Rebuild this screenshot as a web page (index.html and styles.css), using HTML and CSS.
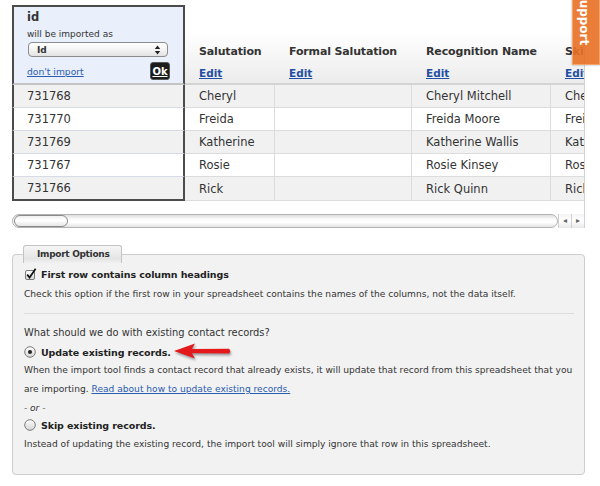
FILE: index.html
```html
<!DOCTYPE html>
<html lang="en">
<head>
<meta charset="utf-8">
<title>Import</title>
<link rel="stylesheet" href="styles.css">
</head>
<body>
<div class="support">Support</div>

<div class="grid-wrap">
  <div class="grid-view">
    <table class="grid">
      <thead>
        <tr>
          <th class="sel">
            <div class="field-name">id</div>
            <div class="imported">will be imported as</div>
            <div class="select"><span>Id</span><svg class="updown" width="7" height="10" viewBox="0 0 7 10"><path d="M3.5 0.5 L6.2 4 H0.8Z M3.5 9.5 L6.2 6 H0.8Z" fill="#222"/></svg></div>
            <div class="sel-actions"><a class="dont" href="#">don't import</a><span class="ok">Ok</span></div>
          </th>
          <th class="c2"><div class="col-name">Salutation</div><a class="edit" href="#">Edit</a></th>
          <th class="c3"><div class="col-name">Formal Salutation</div><a class="edit" href="#">Edit</a></th>
          <th class="c4"><div class="col-name">Recognition Name</div><a class="edit" href="#">Edit</a></th>
          <th class="c5"><div class="col-name">Ski Name</div><a class="edit" href="#">Edit</a></th>
        </tr>
      </thead>
      <tbody>
        <tr><td class="sel">731768</td><td>Cheryl</td><td></td><td>Cheryl Mitchell</td><td>Cheryl Mitchell</td></tr>
        <tr><td class="sel">731770</td><td>Freida</td><td></td><td>Freida Moore</td><td>Freida Moore</td></tr>
        <tr><td class="sel">731769</td><td>Katherine</td><td></td><td>Katherine Wallis</td><td>Katherine Wallis</td></tr>
        <tr><td class="sel">731767</td><td>Rosie</td><td></td><td>Rosie Kinsey</td><td>Rosie Kinsey</td></tr>
        <tr class="last"><td class="sel">731766</td><td>Rick</td><td></td><td>Rick Quinn</td><td>Rick Quinn</td></tr>
      </tbody>
    </table>
  </div>
  <div class="hscroll">
    <div class="track"><div class="thumb"></div></div>
    <div class="arrows"><span class="arr">&#9666;</span><span class="arr">&#9656;</span></div>
  </div>
</div>

<fieldset class="options">
  <legend>Import Options</legend>
  <label class="opt opt-check">
    <svg class="cb" width="12" height="12" viewBox="0 0 12 12">
      <defs><linearGradient id="g1" x1="0" y1="0" x2="0" y2="1"><stop offset="0" stop-color="#fff"/><stop offset="1" stop-color="#d8d8d8"/></linearGradient></defs>
      <rect x="0.5" y="2.5" width="9" height="9" rx="1.5" fill="url(#g1)" stroke="#7a7a7a"/>
      <path d="M2.2 6.6 L4.6 9.6 L10.6 0.8" fill="none" stroke="#111" stroke-width="1.7"/>
    </svg>
    <span>First row contains column headings</span>
  </label>
  <p class="desc">Check this option if the first row in your spreadsheet contains the names of the columns, not the data itself.</p>
  <div class="divider"></div>
  <p class="question">What should we do with existing contact records?</p>
  <label class="opt opt-radio">
    <svg class="rb" width="12" height="12" viewBox="0 0 12 12">
      <defs><linearGradient id="g2" x1="0" y1="0" x2="0" y2="1"><stop offset="0" stop-color="#fff"/><stop offset="1" stop-color="#d4d4d4"/></linearGradient></defs>
      <circle cx="6" cy="6" r="5.3" fill="url(#g2)" stroke="#7d7d7d"/>
      <circle cx="6" cy="6" r="2" fill="#222"/>
    </svg>
    <span>Update existing records.</span>
    <svg class="arrow" width="60" height="20" viewBox="0 0 60 20">
      <path d="M1 9 L22 1.5 L19 7 L56 6.8 Q58.5 9.3 56 11.6 L19 11.2 L22 16.5 Z" fill="#e3191c"/>
    </svg>
  </label>
  <p class="desc">When the import tool finds a contact record that already exists, it will update that record from this spreadsheet that you<br>are importing. <a href="#">Read about how to update existing records.</a></p>
  <p class="or">- or -</p>
  <label class="opt opt-radio">
    <svg class="rb" width="12" height="12" viewBox="0 0 12 12">
      <circle cx="6" cy="6" r="5.3" fill="url(#g2)" stroke="#7d7d7d"/>
    </svg>
    <span>Skip existing records.</span>
  </label>
  <p class="desc desc-last">Instead of updating the existing record, the import tool will simply ignore that row in this spreadsheet.</p>
</fieldset>
</body>
</html>
```

FILE: styles.css
```css
html, body {
  margin: 0;
  background: #fff;
}
body {
  padding: 0 15px 0 12px;
  font-family: "DejaVu Sans", "Liberation Sans", sans-serif;
  color: #333;
  position: relative;
  overflow: hidden;
  height: 486px;
  box-sizing: border-box;
}

/* support tab */
.support {
  position: absolute;
  top: -22px;
  right: 0;
  box-sizing: border-box;
  width: 28px;
  padding: 12px 4px 19px 0;
  background: rgba(232, 112, 36, 0.9);
  border: 1px solid #f3a56c;
  box-shadow: 0 0 2px rgba(0,0,0,0.35);
  color: #fff;
  font-weight: bold;
  font-size: 12px;
  line-height: 22px;
  writing-mode: vertical-rl;
  z-index: 5;
}

/* grid */
.grid-wrap {
  padding-top: 5px;
  border-right: 1px solid #d2d2d2;
}
.grid-view {
  overflow: hidden;
}
.grid {
  table-layout: fixed;
  width: 679px;
  border-collapse: separate;
  border-spacing: 0;
}
.grid th {
  box-sizing: border-box;
  padding: 0 14px 3px;
  vertical-align: bottom;
  text-align: left;
  white-space: nowrap;
  overflow: hidden;
  border-bottom: 2px solid #d3d3d3;
  background: linear-gradient(#fff 35%, #ececec);
}
.grid th.sel {
  width: 173px;
  padding: 2px 13px 3px 13px;
  border: 2px solid #4b4b4b;
  border-bottom: 2px solid #c4c4c4;
  background: #e9effb;
}
.grid th.c2 { width: 90px; }
.grid th.c3 { width: 137px; }
.grid th.c4 { width: 139px; }
.grid th.c5 { width: 140px; }

.col-name {
  font-size: 11px;
  font-weight: bold;
  letter-spacing: -0.15px;
  line-height: 14px;
  margin-bottom: 7px;
}
.edit {
  display: block;
  font-size: 10.5px;
  font-weight: bold;
  line-height: 14px;
  color: #1f4fa3;
  text-decoration: underline;
}

.field-name {
  font-size: 11.5px;
  font-weight: bold;
  line-height: 16px;
}
.imported {
  font-size: 9px;
  font-weight: normal;
  line-height: 12px;
  margin-top: 3px;
}
.select {
  display: flex;
  align-items: center;
  justify-content: space-between;
  box-sizing: border-box;
  width: 140px;
  height: 15px;
  margin: 2px 0 0 1px;
  padding: 0 6px 0 8px;
  border: 1px solid #8c8c8c;
  border-radius: 4px;
  background: linear-gradient(#ffffff, #f4f4f4 50%, #e2e2e2);
  font-size: 9px;
  font-weight: bold;
}
.updown { display: block; }
.sel-actions {
  display: flex;
  align-items: center;
  justify-content: space-between;
  height: 18px;
  margin-top: 5px;
}
.dont {
  font-size: 9.2px;
  font-weight: normal;
  color: #2a5cb0;
  text-decoration: underline;
}
.ok {
  display: flex;
  align-items: center;
  justify-content: center;
  width: 20px;
  height: 18px;
  box-sizing: border-box;
  border-radius: 3px;
  background: #1c1c1c;
  border: 1px solid #555;
  color: #fff;
  font-size: 10px;
  font-weight: bold;
  text-decoration: underline;
}

.grid td {
  box-sizing: border-box;
  height: 23px;
  padding: 0 14px;
  font-size: 11.5px;
  line-height: 22px;
  white-space: nowrap;
  overflow: hidden;
  border-bottom: 1px solid #dcdcdc;
  border-right: 1px solid #dcdcdc;
}
.grid tbody tr:nth-child(odd) td { background: #f1f1f1; }
.grid tbody tr:nth-child(even) td { background: #fff; }
.grid tbody td.sel {
  padding-left: 13px;
  border-left: 2px solid #4b4b4b;
  border-right: 2px solid #4b4b4b;
  border-bottom-color: #d6dbe6;
  background: #e9effb;
}
.grid tbody tr.last td.sel {
  border-bottom: 2px solid #4b4b4b;
}

/* scrollbar */
.hscroll {
  display: flex;
  height: 14px;
  margin-top: 13px;
}
.track {
  flex: 1;
  display: flex;
  align-items: center;
  box-sizing: border-box;
  border: 1px solid #b3b3b3;
  border-radius: 7px;
  background: linear-gradient(#dedede, #fbfbfb 35%, #fff 60%, #e4e4e4);
}
.thumb {
  box-sizing: border-box;
  width: 54px;
  height: 12px;
  margin-left: 1px;
  border: 1px solid #8a8a8a;
  border-radius: 6px;
  background: linear-gradient(#f0f0f0, #fff 45%, #e6e6e6);
}
.arrows {
  display: flex;
}
.arr {
  width: 12px;
  text-align: center;
  font-size: 8px;
  line-height: 14px;
  color: #666;
  border-left: 1px solid #d0d0d0;
  background: linear-gradient(#f4f4f4, #fff 50%, #e8e8e8);
}

/* options */
.options {
  margin: 17px 0 0;
  padding: 0 10px 20px 11px;
  border: 1px solid #cdcdcd;
  border-radius: 4px;
  background: #f2f2f2;
  min-width: 0;
}
.options legend {
  margin-left: -1px;
  padding: 0 12px 0 13px;
  height: 18px;
  box-sizing: border-box;
  line-height: 17px;
  border: 1px solid #c4c4c4;
  border-bottom: none;
  border-radius: 3px 3px 0 0;
  background: linear-gradient(#f6f6f6, #e4e4e4 75%, #f0f0f0);
  font-size: 9px;
  font-weight: bold;
  letter-spacing: -0.3px;
  color: #333;
}
.opt {
  display: flex;
  align-items: center;
  font-size: 9.5px;
  font-weight: bold;
  letter-spacing: -0.1px;
  color: #222;
}
.opt-check {
  height: 22px;
  padding-left: 1px;
}
.opt-check .cb { margin-right: 4px; }
.opt-radio {
  height: 18px;
}
.opt-radio .rb { margin-right: 5px; }
.arrow {
  margin-left: 2px;
  filter: drop-shadow(1px 2px 1px rgba(0,0,0,0.35));
}
.desc {
  margin: 0;
  font-size: 9.1px;
  line-height: 19px;
  color: #333;
}
.desc-last {
  margin-top: 1px;
}
.desc a {
  color: #2a5cb0;
  text-decoration: underline;
}
.divider {
  margin-top: 9px;
  border-top: 1px solid #dcdcdc;
}
.question {
  margin: 9px 0 0;
  font-size: 9.9px;
  line-height: 20px;
}
.or {
  margin: 1px 0 0;
  font-size: 9px;
  font-style: italic;
  line-height: 16px;
}
```
